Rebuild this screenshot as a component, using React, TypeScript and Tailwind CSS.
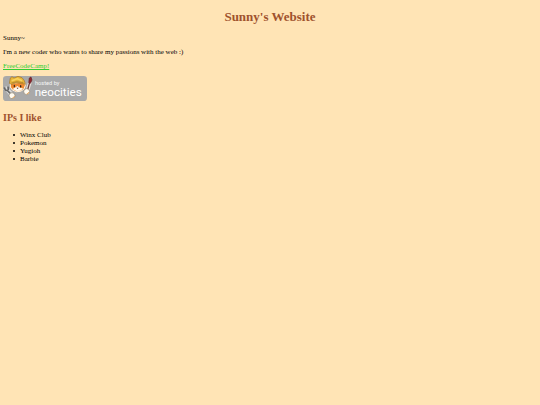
const interests = ["Winx Club", "Pokemon", "Yugioh", "Barbie"];

function NeocitiesBadge() {
  return (
    <svg
      viewBox="10 14 252 75"
      className="block h-[25px] w-[84px]"
      role="img"
      aria-label="hosted by neocities"
    >
      <rect x="10" y="14" width="252" height="75" rx="10" fill="#a9a9a9" />

      {/* wrench */}
      <path d="M15 49l9 7 12 14" fill="none" stroke="#d8d8d8" strokeWidth="13" />
      <path d="M14 48l3 8 7 2 12 13M25 46l1 10" fill="none" stroke="#666666" strokeWidth="5" />

      {/* head */}
      <path
        d="M32 36l42-4 3 10-4 11-10 7-13 1-12-5-6-9z"
        fill="#f08a30"
        stroke="#fff4df"
        strokeWidth="3"
      />
      <path d="M38 53l8-4 7-5 8 5 9 2-7 7-13 1z" fill="#fffaf0" />
      <path
        d="M29 36l3-16 5-4 6 4 12-5 12 4 7 9 3 11-12-3-16-2-13 5z"
        fill="#e8b437"
        stroke="#a1752a"
        strokeWidth="2"
      />
      <path d="M36 28l17-6 14 6" fill="none" stroke="#f8d35e" strokeWidth="5" />
      <path d="M35 35l16-4 20 3" fill="none" stroke="#a1752a" strokeWidth="2" />
      <ellipse cx="44" cy="44" rx="2" ry="4" fill="#35251a" />
      <ellipse cx="63" cy="45" rx="2" ry="4" fill="#35251a" />
      <path d="M50 49h7l-3 4z" fill="#5b2c20" />

      {/* paws */}
      <circle cx="37" cy="73" r="9" fill="#fffaf0" stroke="#8c8270" strokeWidth="2" />
      <path d="M38 80q5-1 7-6" fill="none" stroke="#e6a55b" strokeWidth="3" />
      <path d="M84 54l7-22" stroke="#e5dcd6" strokeWidth="11" />
      <path d="M84 55l6-22" stroke="#6b3f3b" strokeWidth="4" />
      <path d="M87 34l2-14 5-3 3 9-5 10z" fill="#91252b" stroke="#622226" strokeWidth="2" />
      <circle cx="81" cy="61" r="9" fill="#fffaf0" stroke="#8c8270" strokeWidth="2" />
      <path d="M81 68q6-1 7-6" fill="none" stroke="#e6a55b" strokeWidth="3" />

      <text x="106" y="41" fontSize="17" fill="#f5f5f5" fontFamily="Roboto, sans-serif">
        hosted by
      </text>
      <text x="105" y="74" fontSize="35" fill="#ffffff" fontFamily="Roboto, sans-serif">
        neocities
      </text>
    </svg>
  );
}

export default function App() {
  return (
    <div className="min-h-screen bg-[#ffe4b5] px-[3px] pt-[9px] font-['Liberation_Serif',serif] text-[7px] leading-[8px] text-black">
      <h1 className="text-center text-[13px] leading-[16px] font-bold text-[#a0522d]">
        Sunny's Website
      </h1>

      <main className="mt-[9px] flex flex-col items-start gap-[6px]">
        <p>Sunny~</p>
        <p>I'm a new coder who wants to share my passions with the web :)</p>
        <a href="https://www.freecodecamp.org" className="text-[#32cd32] underline">
          FreeCodeCamp!
        </a>
        <a href="https://neocities.org">
          <NeocitiesBadge />
        </a>
      </main>

      <section className="mt-[11px]">
        <h2 className="text-[10px] leading-[12px] font-bold text-[#a0522d]">IPs I like</h2>
        <ul className="mt-[7px] pl-[10px]">
          {interests.map((name) => (
            <li
              key={name}
              className="flex items-center gap-[5px] before:size-[2px] before:rounded-full before:bg-black"
            >
              {name}
            </li>
          ))}
        </ul>
      </section>
    </div>
  );
}
